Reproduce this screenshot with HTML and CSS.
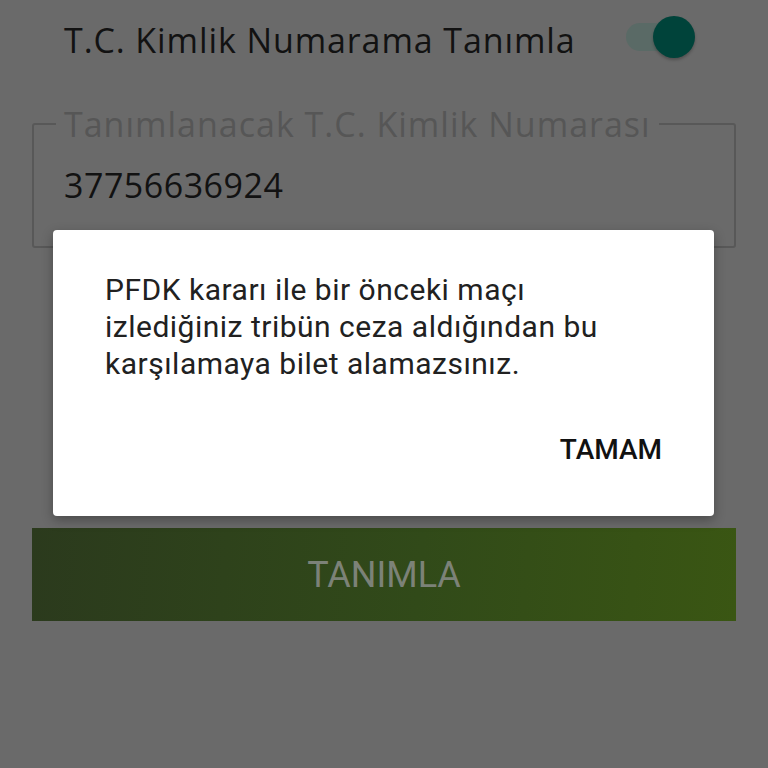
FILE: index.html
```html
<!DOCTYPE html>
<html lang="tr">
<head>
    <meta charset="UTF-8">
    <meta name="viewport" content="width=device-width, initial-scale=1.0">
    <title>T.C. Kimlik Numarama Tanımla</title>
    <link rel="stylesheet" href="styles.css">
</head>
<body>
    <div class="page">
        <!-- Switch row -->
        <div class="switch-row">
            <span class="switch-label">T.C. Kimlik Numarama Tanımla</span>
            <div class="switch switch-on">
                <div class="switch-track"></div>
                <div class="switch-thumb"></div>
            </div>
        </div>

        <!-- Outlined text field -->
        <fieldset class="field">
            <legend class="field-label">Tanımlanacak T.C. Kimlik Numarası</legend>
            <div class="field-value">37756636924</div>
        </fieldset>

        <button class="submit-button">TANIMLA</button>
    </div>

    <!-- Alert dialog -->
    <div class="dialog">
        <p class="dialog-message">PFDK kararı ile bir önceki maçı izlediğiniz tribün ceza aldığından bu karşılamaya bilet alamazsınız.</p>
        <div class="dialog-actions">
            <button class="dialog-button">TAMAM</button>
        </div>
    </div>
</body>
</html>
```

FILE: styles.css
```css
body {
    margin: 0;
    background-color: #6a6a6a; /* page under the dim overlay */
    font-family: "Open Sans", "Noto Sans", sans-serif;
    color: #121212;
}

.page {
    width: 768px;
    height: 768px;
}

.switch-row {
    display: flex;
    align-items: center;
    justify-content: space-between;
    height: 80px;
    padding: 0 73px 0 64px;
}
.switch-label {
    font-size: 34px;
    line-height: 46px;
    letter-spacing: 0.9px;
}

.switch {
    position: relative;
    width: 69px;
    height: 42px;
    margin-top: -6px;
}
.switch-track {
    position: absolute;
    left: 0;
    top: 7px;
    width: 56px;
    height: 28px;
    border-radius: 14px;
    background-color: #5a6a66;
}
.switch-thumb {
    position: absolute;
    right: 0;
    top: 0;
    width: 42px;
    height: 42px;
    border-radius: 50%;
    background-color: #00433a;
    box-shadow: 0 2px 3px rgba(0, 0, 0, 0.25);
}

.field {
    margin: 24px 32px 0 32px;
    padding: 0 30px 41px 30px;
    border: 2px solid #585858;
    border-radius: 3px;
}
.field-label {
    margin-left: -8px;
    padding: 0 8px;
    font-size: 34px;
    line-height: 40px;
    letter-spacing: 1px;
    color: #565656;
}
.field-value {
    margin-top: 21px;
    font-size: 34px;
    line-height: 40px;
    letter-spacing: 0.5px;
}

.submit-button {
    display: block;
    width: 704px;
    height: 93px;
    margin: 280px 32px 0 32px;
    border: none;
    background: linear-gradient(95deg, #2b3a1d 0%, #314a19 55%, #3a5613 100%);
    font-family: Roboto, sans-serif;
    font-size: 36px;
    color: #7c8278;
}

/* Dialog sits over the dimmed page */
.dialog {
    position: absolute;
    top: 230px;
    left: 53px;
    width: 661px;
    box-sizing: border-box;
    padding: 41px 52px 48px 52px;
    background-color: white;
    border-radius: 4px;
    box-shadow: 0 4px 12px rgba(0, 0, 0, 0.3);
    font-family: Roboto, sans-serif;
}
.dialog-message {
    margin: 0;
    max-width: 520px;
    font-size: 30px;
    line-height: 37px;
    letter-spacing: 0.5px;
    color: #212121;
}
.dialog-actions {
    display: flex;
    justify-content: flex-end;
    margin-top: 50px;
}
.dialog-button {
    padding: 0;
    border: none;
    background: none;
    font-family: Roboto, sans-serif;
    font-size: 28px;
    font-weight: 500;
    line-height: 36px;
    color: #111;
}
```
